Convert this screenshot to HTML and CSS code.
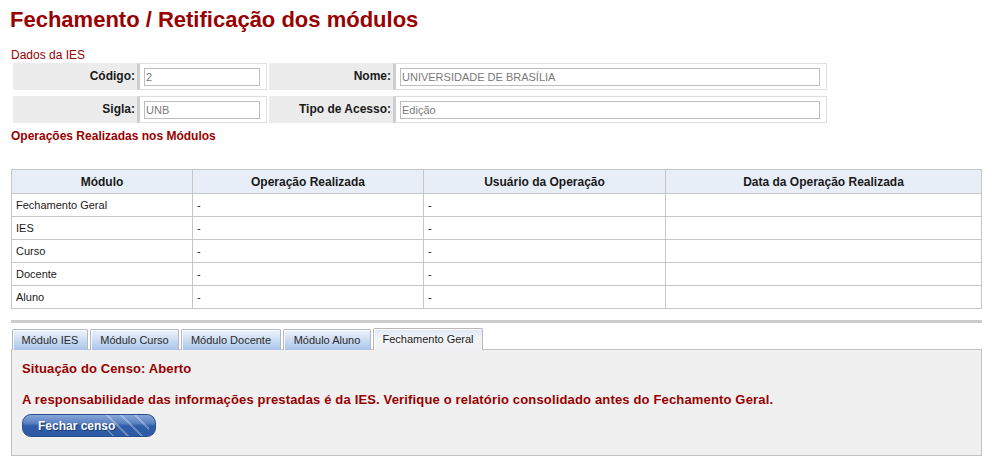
FILE: index.html
```html
<!DOCTYPE html>
<html lang="pt-BR">
<head>
<meta charset="utf-8">
<title>Fechamento / Retificação dos módulos</title>
<link rel="stylesheet" href="styles.css">
</head>
<body>
<div class="page">
  <h1 class="title">Fechamento / Retificação dos módulos</h1>

  <div class="section-label">Dados da IES</div>
  <div class="ies-form">
    <div class="form-row">
      <div class="field">
        <div class="lbl">Código:</div>
        <div class="val val-short"><input class="inp" type="text" value="2" readonly></div>
      </div>
      <div class="field">
        <div class="lbl">Nome:</div>
        <div class="val val-long"><input class="inp" type="text" value="UNIVERSIDADE DE BRASÍLIA" readonly></div>
      </div>
    </div>
    <div class="form-row">
      <div class="field">
        <div class="lbl">Sigla:</div>
        <div class="val val-short"><input class="inp" type="text" value="UNB" readonly></div>
      </div>
      <div class="field">
        <div class="lbl">Tipo de Acesso:</div>
        <div class="val val-long"><input class="inp" type="text" value="Edição" readonly></div>
      </div>
    </div>
  </div>

  <div class="section-title">Operações Realizadas nos Módulos</div>

  <table class="ops">
    <colgroup>
      <col class="c1"><col class="c2"><col class="c3"><col class="c4">
    </colgroup>
    <thead>
      <tr><th>Módulo</th><th>Operação Realizada</th><th>Usuário da Operação</th><th>Data da Operação Realizada</th></tr>
    </thead>
    <tbody>
      <tr><td>Fechamento Geral</td><td>-</td><td>-</td><td></td></tr>
      <tr><td>IES</td><td>-</td><td>-</td><td></td></tr>
      <tr><td>Curso</td><td>-</td><td>-</td><td></td></tr>
      <tr><td>Docente</td><td>-</td><td>-</td><td></td></tr>
      <tr><td>Aluno</td><td>-</td><td>-</td><td></td></tr>
    </tbody>
  </table>

  <div class="sep"></div>

  <div class="tabs">
    <div class="tab t1">Módulo IES</div>
    <div class="tab t2">Módulo Curso</div>
    <div class="tab t3">Módulo Docente</div>
    <div class="tab t4">Módulo Aluno</div>
    <div class="tab t5 active">Fechamento Geral</div>
  </div>
  <div class="panel">
    <div class="status">Situação do Censo: Aberto</div>
    <div class="warning">A responsabilidade das informações prestadas é da IES. Verifique o relatório consolidado antes do Fechamento Geral.</div>
    <button class="btn" type="button">Fechar censo</button>
  </div>
</div>
</body>
</html>
```

FILE: styles.css
```css
* { box-sizing: border-box; }

body {
  margin: 0;
  background: #ffffff;
  font-family: "Liberation Sans", Arial, sans-serif;
  color: #222;
}

.page {
  padding: 7px 5px 0 11px;
}

.title {
  margin: 0 0 0 -1px;
  font-size: 22px;
  line-height: 25px;
  font-weight: bold;
  color: #990000;
}

.section-label {
  margin-top: 16px;
  font-size: 12px;
  line-height: 14px;
  color: #990000;
}

.ies-form {
  margin: 1px 0 0 2px;
  display: flex;
  flex-direction: column;
  gap: 6px;
}

.form-row {
  display: flex;
  gap: 2px;
}

.field {
  display: flex;
}

.lbl {
  width: 124px;
  background: #ececec;
  height: 27px;
  line-height: 27px;
  text-align: right;
  padding-right: 2px;
  font-size: 12px;
  font-weight: bold;
  color: #1a1a1a;
}

.val {
  height: 27px;
  border: 1px solid #dedede;
  border-left: 3px solid #cfcfcf;
  padding: 4px 6px 3px 4px;
  background: #fff;
}

.val-short { width: 130px; }
.val-long { width: 434px; }

.inp {
  display: block;
  width: 100%;
  height: 18px;
  margin: 0;
  border: 1px solid #bdbdbd;
  padding: 0 1px;
  font-family: "Liberation Sans", Arial, sans-serif;
  font-size: 11px;
  color: #7a7a7a;
  background: #fff;
  outline: none;
}

.section-title {
  margin-top: 6px;
  font-size: 12px;
  line-height: 14px;
  font-weight: bold;
  color: #990000;
}

.ops {
  margin-top: 26px;
  width: 971px;
  border-collapse: collapse;
  table-layout: fixed;
  font-size: 11px;
}

.ops .c1 { width: 181px; }
.ops .c2 { width: 231px; }
.ops .c3 { width: 242px; }

.ops th,
.ops td {
  border: 1px solid #c6c6c6;
  padding: 0 4px;
}

.ops th {
  height: 24px;
  background: #e7eef8;
  font-size: 12px;
  font-weight: bold;
  color: #1a1a1a;
  text-align: center;
}

.ops td {
  height: 23px;
  color: #1a1a1a;
}

.sep {
  margin-top: 11px;
  height: 3px;
  background: #cccccc;
}

.tabs {
  margin: 6px 0 0 1px;
  display: flex;
  gap: 2px;
  position: relative;
  z-index: 1;
}

.tab {
  height: 21px;
  line-height: 20px;
  text-align: center;
  font-size: 11px;
  color: #2a2a2a;
  border: 1px solid #b4b8c0;
  border-bottom: none;
  border-radius: 2px 2px 0 0;
  background: linear-gradient(to bottom, #eef3fb 0%, #d3e1f4 40%, #a9c4ea 100%);
  box-shadow: inset 1px 1px 0 rgba(255,255,255,0.8);
}

.t1 { width: 76px; }
.t2 { width: 89px; }
.t3 { width: 100px; }
.t4 { width: 88px; }
.t5 { width: 110px; }

.tab.active {
  height: 22px;
  margin-top: -1px;
  line-height: 21px;
  border-color: #b8b8b8;
  background: linear-gradient(to bottom, #dfe8f6 0%, #f2f4f7 45%, #f0f0f0 100%);
  color: #1a1a1a;
}

.panel {
  margin-top: -1px;
  height: 107px;
  border: 1px solid #c2c2c2;
  background: #f0f0f0;
  padding: 11px 10px 0 10px;
}

.status {
  font-size: 13px;
  line-height: 15px;
  font-weight: bold;
  letter-spacing: 0.12px;
  color: #990000;
}

.warning {
  margin-top: 16px;
  font-size: 13px;
  line-height: 15px;
  font-weight: bold;
  letter-spacing: 0.16px;
  color: #990000;
}

.btn {
  position: relative;
  display: block;
  margin-top: 7px;
  width: 134px;
  height: 23px;
  padding: 0 0 0 15px;
  border: 1px solid #2b4f8e;
  border-radius: 9px;
  background: linear-gradient(to bottom, #86a6d8 0%, #5a80c2 40%, #2f5ea9 52%, #2c5aa3 100%);
  color: #ffffff;
  font-family: "Liberation Sans", Arial, sans-serif;
  font-size: 12px;
  font-weight: bold;
  text-align: left;
  text-shadow: 1px 1px 0 #1b3a70;
  overflow: hidden;
  cursor: pointer;
}

.btn::after {
  content: "";
  position: absolute;
  top: 0;
  right: 6px;
  width: 44px;
  height: 100%;
  background: repeating-linear-gradient(45deg, rgba(255,255,255,0) 0 5px, rgba(255,255,255,0.28) 5px 7px, rgba(255,255,255,0) 7px 10px);
}
```
